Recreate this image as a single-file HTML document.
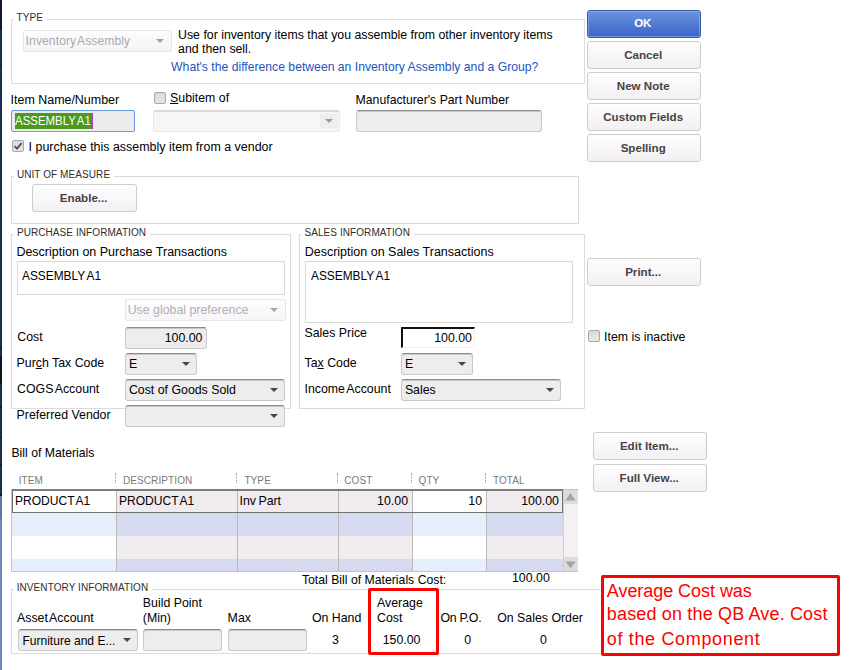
<!DOCTYPE html>
<html><head><meta charset="utf-8"><style>
html,body{margin:0;padding:0;background:#fff;width:866px;height:670px;overflow:hidden;position:relative;font-family:"Liberation Sans",sans-serif;}
.t{position:absolute;white-space:pre;}
.b{position:absolute;box-sizing:border-box;}
</style></head><body>
<div class="b" style="left:0px;top:0px;width:2px;height:30px;background:#0d1a2c;"></div>
<div class="b" style="left:0px;top:30px;width:2px;height:466px;background:#1b2f4d;"></div>
<div class="b" style="left:0px;top:356px;width:2px;height:28px;background:#0b1624;"></div>
<div class="b" style="left:0px;top:65px;width:2px;height:1px;background:#0b1624;"></div>
<div class="b" style="left:0px;top:347px;width:2px;height:1px;background:#0b1624;"></div>
<div class="b" style="left:0px;top:407px;width:2px;height:1px;background:#0b1624;"></div>
<div class="b" style="left:0px;top:437px;width:2px;height:1px;background:#0b1624;"></div>
<div class="b" style="left:0px;top:464px;width:2px;height:1px;background:#0b1624;"></div>
<div class="b" style="left:0px;top:494px;width:2px;height:1px;background:#0b1624;"></div>
<div class="b" style="left:0px;top:495px;width:2px;height:1px;background:#0b1624;"></div>
<div class="b" style="left:0px;top:496px;width:2px;height:174px;background:#6b8bbc;"></div>
<div class="b" style="left:0px;top:496px;width:2px;height:23px;background:#5f7aa0;"></div>
<div class="b" style="left:11px;top:19px;width:574px;height:65px;border:1px solid #dedade;"></div>
<div class="t" style="left:16.60px;top:12.54px;font-size:10px;line-height:10px;color:#2e2e2e;font-weight:normal;background:#fff;padding:0 4px 0 3px;margin-left:-3px;letter-spacing:0.08px;">TYPE</div>
<div class="b" style="left:23px;top:30px;width:149px;height:22px;background:linear-gradient(#fdfdfd,#f6f3f6);border:1px solid #e6e6e6;border-radius:2px;"></div>
<div class="t" style="left:25.60px;top:35.26px;font-size:12.1px;line-height:12.1px;color:#a9a9b0;font-weight:normal;word-spacing:-2px;letter-spacing:0.1px;">Inventory Assembly</div>
<svg class="b" style="left:156px;top:39px" width="8" height="4" viewBox="0 0 8 4"><path d="M0 0H8L4.0 4Z" fill="#a0a0a0"/></svg>
<div class="t" style="left:178.10px;top:29.29px;font-size:12.3px;line-height:12.3px;color:#000;font-weight:normal;">Use for inventory items that you assemble from other inventory items</div>
<div class="t" style="left:178.10px;top:43.29px;font-size:12.3px;line-height:12.3px;color:#000;font-weight:normal;">and then sell.</div>
<div class="t" style="left:171.10px;top:61.37px;font-size:12.2px;line-height:12.2px;color:#2455bd;font-weight:normal;">What's the difference between an Inventory Assembly and a Group?</div>
<div class="t" style="left:10.60px;top:93.86px;font-size:12.45px;line-height:12.45px;color:#000;font-weight:normal;">Item Name/Number</div>
<div class="b" style="left:11px;top:110px;width:124px;height:22px;background:#ececec;border:1px solid #6c9ad6;border-radius:2px;"></div>
<div class="b" style="left:15px;top:113px;width:78px;height:16px;background:#4b9a1b;"></div>
<div class="b" style="left:92px;top:113px;width:1px;height:16px;background:#a040e0;"></div>
<div class="t" style="left:14.60px;top:114.79px;font-size:12.3px;line-height:12.3px;color:#fff;font-weight:normal;word-spacing:-1.5px;transform:scaleX(0.93);transform-origin:0 0;">ASSEMBLY A1</div>
<div class="b" style="left:154px;top:92px;width:12px;height:12px;background:linear-gradient(#d8d8d8,#e8e8e8);border:1px solid #a8a8a8;border-radius:2px;"></div>
<div class="t" style="left:170.10px;top:91.85px;font-size:12.35px;line-height:12.35px;color:#000;font-weight:normal;"><u>S</u>ubitem of</div>
<div class="b" style="left:153px;top:110px;width:187px;height:22px;background:#f6f6f6;border:1px solid #e8e8e8;border-top:2px solid #dcd8dc;border-radius:2px;"></div>
<div class="b" style="left:320px;top:114px;width:18px;height:14px;background:#eeeeee;"></div>
<svg class="b" style="left:325px;top:119px" width="8" height="4" viewBox="0 0 8 4"><path d="M0 0H8L4.0 4Z" fill="#9a9a9a"/></svg>
<div class="t" style="left:355.60px;top:94.33px;font-size:12.25px;line-height:12.25px;color:#000;font-weight:normal;">Manufacturer's Part Number</div>
<div class="b" style="left:356px;top:110px;width:186px;height:22px;background:#ededed;border:1px solid #c9c9c9;border-top-color:#8c8c8c;border-radius:3px;box-shadow:inset 0 1px 0 #c8c8c8;"></div>
<div class="b" style="left:12px;top:140px;width:12px;height:12px;background:linear-gradient(#d8d8d8,#e8e8e8);border:1px solid #a8a8a8;border-radius:2px;"></div>
<svg class="b" style="left:13px;top:141px" width="10" height="10" viewBox="0 0 10 10"><path d="M1.5 5.2L4 7.6L8.6 2.2" stroke="#505050" stroke-width="1.8" fill="none"/></svg>
<div class="t" style="left:28.60px;top:141.16px;font-size:12.45px;line-height:12.45px;color:#000;font-weight:normal;">I purchase this assembly item from a vendor</div>
<div class="b" style="left:11px;top:176px;width:568px;height:48px;border:1px solid #dedade;"></div>
<div class="t" style="left:16.90px;top:169.83px;font-size:10px;line-height:10px;color:#2e2e2e;font-weight:normal;background:#fff;padding:0 4px 0 3px;margin-left:-3px;letter-spacing:0.08px;">UNIT OF MEASURE</div>
<div class="b" style="left:32px;top:184px;width:105px;height:28px;background:linear-gradient(#fefefe,#f3eff3);border:1px solid #cdcdcd;border-radius:3px;"></div>
<div class="t" style="left:-116.3px;width:400px;text-align:center;top:192.28px;font-size:11.6px;line-height:11.6px;color:#444;font-weight:bold;">Enable...</div>
<div class="b" style="left:587px;top:10px;width:114px;height:28px;background:linear-gradient(#6a94e0,#3c63c8);border:1px solid #3a5aa6;border-radius:3px;box-shadow:inset 0 0 0 1px rgba(150,185,245,0.55);"></div>
<div class="t" style="left:442.79999999999995px;width:400px;text-align:center;top:18.47px;font-size:11.5px;line-height:11.5px;color:#fff;font-weight:bold;">OK</div>
<div class="b" style="left:587px;top:41px;width:114px;height:28px;background:linear-gradient(#fefefe,#f3eff3);border:1px solid #cdcdcd;border-radius:3px;"></div>
<div class="t" style="left:443.20000000000005px;width:400px;text-align:center;top:48.98px;font-size:11.6px;line-height:11.6px;color:#444;font-weight:bold;">Cancel</div>
<div class="b" style="left:587px;top:72px;width:114px;height:28px;background:linear-gradient(#fefefe,#f3eff3);border:1px solid #cdcdcd;border-radius:3px;"></div>
<div class="t" style="left:443.20000000000005px;width:400px;text-align:center;top:79.98px;font-size:11.6px;line-height:11.6px;color:#444;font-weight:bold;">New Note</div>
<div class="b" style="left:587px;top:103px;width:114px;height:28px;background:linear-gradient(#fefefe,#f3eff3);border:1px solid #cdcdcd;border-radius:3px;"></div>
<div class="t" style="left:443.20000000000005px;width:400px;text-align:center;top:110.98px;font-size:11.6px;line-height:11.6px;color:#444;font-weight:bold;">Custom Fields</div>
<div class="b" style="left:587px;top:134px;width:114px;height:28px;background:linear-gradient(#fefefe,#f3eff3);border:1px solid #cdcdcd;border-radius:3px;"></div>
<div class="t" style="left:443.20000000000005px;width:400px;text-align:center;top:141.98px;font-size:11.6px;line-height:11.6px;color:#444;font-weight:bold;">Spellin<span style="text-decoration:underline">g</span></div>
<div class="b" style="left:587px;top:258px;width:114px;height:28px;background:linear-gradient(#fefefe,#f3eff3);border:1px solid #cdcdcd;border-radius:3px;"></div>
<div class="t" style="left:443.20000000000005px;width:400px;text-align:center;top:265.78px;font-size:11.6px;line-height:11.6px;color:#444;font-weight:bold;">Print...</div>
<div class="b" style="left:588px;top:330px;width:12px;height:12px;background:linear-gradient(#d8d8d8,#e8e8e8);border:1px solid #a8a8a8;border-radius:2px;"></div>
<div class="t" style="left:604.10px;top:331.49px;font-size:12.3px;line-height:12.3px;color:#000;font-weight:normal;">Item is inactive</div>
<div class="b" style="left:11px;top:234px;width:280px;height:175px;border:1px solid #dedade;"></div>
<div class="t" style="left:16.90px;top:228.03px;font-size:10px;line-height:10px;color:#2e2e2e;font-weight:normal;background:#fff;padding:0 4px 0 3px;margin-left:-3px;letter-spacing:0.08px;">PURCHASE INFORMATION</div>
<div class="t" style="left:16.40px;top:245.92px;font-size:12.5px;line-height:12.5px;color:#000;font-weight:normal;">Description on Purchase Transactions</div>
<div class="b" style="left:17px;top:261px;width:268px;height:34px;background:#fff;border:1px solid #dcd8dc;"></div>
<div class="t" style="left:22.30px;top:270.29px;font-size:12.3px;line-height:12.3px;color:#000;font-weight:normal;word-spacing:-1px;transform:scaleX(0.965);transform-origin:0 0;">ASSEMBLY A1</div>
<div class="b" style="left:125px;top:299px;width:161px;height:22px;background:linear-gradient(#fdfdfd,#f7f5f7);border:1px solid #e6e6e6;border-radius:2px;"></div>
<div class="t" style="left:127.70px;top:304.25px;font-size:12.35px;line-height:12.35px;color:#b0b0b8;font-weight:normal;">Use global preference</div>
<svg class="b" style="left:270px;top:308px" width="8" height="4" viewBox="0 0 8 4"><path d="M0 0H8L4.0 4Z" fill="#a8a8a8"/></svg>
<div class="t" style="left:17.30px;top:331.35px;font-size:12.35px;line-height:12.35px;color:#000;font-weight:normal;">Cost</div>
<div class="b" style="left:125px;top:327px;width:82px;height:22px;background:#ededed;border:1px solid #c9c9c9;border-top-color:#8c8c8c;border-radius:3px;box-shadow:inset 0 1px 0 #c8c8c8;"></div>
<div class="t" style="right:663.5px;top:332.25px;font-size:12.35px;line-height:12.35px;color:#000;font-weight:normal;">100.00</div>
<div class="t" style="left:16.60px;top:357.15px;font-size:12.35px;line-height:12.35px;color:#000;font-weight:normal;">Pur<u>c</u>h Tax Code</div>
<div class="b" style="left:125px;top:353px;width:72px;height:22px;background:#ededed;border:1px solid #c9c9c9;border-top-color:#8c8c8c;border-radius:3px;box-shadow:inset 0 1px 0 #c8c8c8;"></div>
<div class="t" style="left:128.90px;top:358.25px;font-size:12.35px;line-height:12.35px;color:#000;font-weight:normal;">E</div>
<svg class="b" style="left:182px;top:362px" width="8" height="4" viewBox="0 0 8 4"><path d="M0 0H8L4.0 4Z" fill="#454545"/></svg>
<div class="t" style="left:17.10px;top:383.05px;font-size:12.35px;line-height:12.35px;color:#000;font-weight:normal;word-spacing:-1.5px;">COGS Account</div>
<div class="b" style="left:125px;top:379px;width:160px;height:22px;background:#ededed;border:1px solid #c9c9c9;border-top-color:#8c8c8c;border-radius:3px;box-shadow:inset 0 1px 0 #c8c8c8;"></div>
<div class="t" style="left:128.90px;top:384.25px;font-size:12.35px;line-height:12.35px;color:#000;font-weight:normal;">Cost of Goods Sold</div>
<svg class="b" style="left:270px;top:388px" width="8" height="4" viewBox="0 0 8 4"><path d="M0 0H8L4.0 4Z" fill="#454545"/></svg>
<div class="t" style="left:16.60px;top:409.25px;font-size:12.35px;line-height:12.35px;color:#000;font-weight:normal;">Preferred Vendor</div>
<div class="b" style="left:125px;top:405px;width:160px;height:22px;background:#ededed;border:1px solid #c9c9c9;border-top-color:#8c8c8c;border-radius:3px;box-shadow:inset 0 1px 0 #c8c8c8;"></div>
<svg class="b" style="left:270px;top:414px" width="8" height="4" viewBox="0 0 8 4"><path d="M0 0H8L4.0 4Z" fill="#454545"/></svg>
<div class="b" style="left:299px;top:234px;width:286px;height:175px;border:1px solid #dedade;"></div>
<div class="t" style="left:304.40px;top:228.03px;font-size:10px;line-height:10px;color:#2e2e2e;font-weight:normal;background:#fff;padding:0 4px 0 3px;margin-left:-3px;letter-spacing:0.08px;">SALES INFORMATION</div>
<div class="t" style="left:304.70px;top:246.02px;font-size:12.5px;line-height:12.5px;color:#000;font-weight:normal;">Description on Sales Transactions</div>
<div class="b" style="left:305px;top:261px;width:268px;height:62px;background:#fff;border:1px solid #dcd8dc;"></div>
<div class="t" style="left:310.50px;top:270.29px;font-size:12.3px;line-height:12.3px;color:#000;font-weight:normal;word-spacing:-1px;transform:scaleX(0.965);transform-origin:0 0;">ASSEMBLY A1</div>
<div class="t" style="left:304.50px;top:327.05px;font-size:12.35px;line-height:12.35px;color:#000;font-weight:normal;">Sales Price</div>
<div class="b" style="left:401px;top:327px;width:74px;height:21px;background:#fff;border:1px solid #f0f0f0;border-top:2px solid #111;border-left:2px solid #111;"></div>
<div class="t" style="right:394px;top:332.25px;font-size:12.35px;line-height:12.35px;color:#000;font-weight:normal;">100.00</div>
<div class="t" style="left:304.50px;top:356.75px;font-size:12.35px;line-height:12.35px;color:#000;font-weight:normal;">Ta<u>x</u> Code</div>
<div class="b" style="left:401px;top:353px;width:72px;height:22px;background:#ededed;border:1px solid #c9c9c9;border-top-color:#8c8c8c;border-radius:3px;box-shadow:inset 0 1px 0 #c8c8c8;"></div>
<div class="t" style="left:404.90px;top:358.25px;font-size:12.35px;line-height:12.35px;color:#000;font-weight:normal;">E</div>
<svg class="b" style="left:458px;top:362px" width="8" height="4" viewBox="0 0 8 4"><path d="M0 0H8L4.0 4Z" fill="#454545"/></svg>
<div class="t" style="left:304.50px;top:382.75px;font-size:12.35px;line-height:12.35px;color:#000;font-weight:normal;word-spacing:-1.5px;">Income Account</div>
<div class="b" style="left:401px;top:379px;width:160px;height:22px;background:#ededed;border:1px solid #c9c9c9;border-top-color:#8c8c8c;border-radius:3px;box-shadow:inset 0 1px 0 #c8c8c8;"></div>
<div class="t" style="left:404.90px;top:384.25px;font-size:12.35px;line-height:12.35px;color:#000;font-weight:normal;">Sales</div>
<svg class="b" style="left:546px;top:388px" width="8" height="4" viewBox="0 0 8 4"><path d="M0 0H8L4.0 4Z" fill="#454545"/></svg>
<div class="b" style="left:593px;top:432px;width:114px;height:28px;background:linear-gradient(#fefefe,#f3eff3);border:1px solid #cdcdcd;border-radius:3px;"></div>
<div class="t" style="left:449.20000000000005px;width:400px;text-align:center;top:439.78px;font-size:11.6px;line-height:11.6px;color:#444;font-weight:bold;">Edit Item...</div>
<div class="b" style="left:593px;top:464px;width:114px;height:28px;background:linear-gradient(#fefefe,#f3eff3);border:1px solid #cdcdcd;border-radius:3px;"></div>
<div class="t" style="left:449.20000000000005px;width:400px;text-align:center;top:471.78px;font-size:11.6px;line-height:11.6px;color:#444;font-weight:bold;">Full View...</div>
<div class="t" style="left:11.40px;top:446.63px;font-size:12.25px;line-height:12.25px;color:#000;font-weight:normal;">Bill of Materials</div>
<div class="t" style="left:18.70px;top:475.94px;font-size:10px;line-height:10px;color:#7a7a7a;font-weight:normal;letter-spacing:0.1px;">ITEM</div>
<div class="t" style="left:122.90px;top:475.94px;font-size:10px;line-height:10px;color:#7a7a7a;font-weight:normal;letter-spacing:0.1px;">DESCRIPTION</div>
<div class="b" style="left:115px;top:473px;width:1px;height:10px;border-left:1px dotted #999"></div>
<div class="t" style="left:244.40px;top:475.94px;font-size:10px;line-height:10px;color:#7a7a7a;font-weight:normal;letter-spacing:0.1px;">TYPE</div>
<div class="b" style="left:236px;top:473px;width:1px;height:10px;border-left:1px dotted #999"></div>
<div class="t" style="left:344.30px;top:475.94px;font-size:10px;line-height:10px;color:#7a7a7a;font-weight:normal;letter-spacing:0.1px;">COST</div>
<div class="b" style="left:337px;top:473px;width:1px;height:10px;border-left:1px dotted #999"></div>
<div class="t" style="left:418.50px;top:475.94px;font-size:10px;line-height:10px;color:#7a7a7a;font-weight:normal;letter-spacing:0.1px;">QTY</div>
<div class="b" style="left:411px;top:473px;width:1px;height:10px;border-left:1px dotted #999"></div>
<div class="t" style="left:492.90px;top:475.94px;font-size:10px;line-height:10px;color:#7a7a7a;font-weight:normal;letter-spacing:0.1px;">TOTAL</div>
<div class="b" style="left:485px;top:473px;width:1px;height:10px;border-left:1px dotted #999"></div>
<div class="b" style="left:12px;top:490px;width:104px;height:23px;background:#ffffff;"></div>
<div class="b" style="left:116px;top:490px;width:121px;height:23px;background:#efebee;"></div>
<div class="b" style="left:237px;top:490px;width:101px;height:23px;background:#efebee;"></div>
<div class="b" style="left:338px;top:490px;width:74px;height:23px;background:#efebee;"></div>
<div class="b" style="left:412px;top:490px;width:74px;height:23px;background:#ffffff;"></div>
<div class="b" style="left:486px;top:490px;width:77px;height:23px;background:#efebee;"></div>
<div class="b" style="left:12px;top:513px;width:104px;height:23px;background:#e6eefb;"></div>
<div class="b" style="left:116px;top:513px;width:121px;height:23px;background:#d5daee;"></div>
<div class="b" style="left:237px;top:513px;width:101px;height:23px;background:#d5daee;"></div>
<div class="b" style="left:338px;top:513px;width:74px;height:23px;background:#d5daee;"></div>
<div class="b" style="left:412px;top:513px;width:74px;height:23px;background:#e6eefb;"></div>
<div class="b" style="left:486px;top:513px;width:77px;height:23px;background:#d5daee;"></div>
<div class="b" style="left:12px;top:536px;width:104px;height:23px;background:#ffffff;"></div>
<div class="b" style="left:116px;top:536px;width:121px;height:23px;background:#efebee;"></div>
<div class="b" style="left:237px;top:536px;width:101px;height:23px;background:#efebee;"></div>
<div class="b" style="left:338px;top:536px;width:74px;height:23px;background:#efebee;"></div>
<div class="b" style="left:412px;top:536px;width:74px;height:23px;background:#ffffff;"></div>
<div class="b" style="left:486px;top:536px;width:77px;height:23px;background:#efebee;"></div>
<div class="b" style="left:12px;top:559px;width:104px;height:12px;background:#e6eefb;"></div>
<div class="b" style="left:116px;top:559px;width:121px;height:12px;background:#d5daee;"></div>
<div class="b" style="left:237px;top:559px;width:101px;height:12px;background:#d5daee;"></div>
<div class="b" style="left:338px;top:559px;width:74px;height:12px;background:#d5daee;"></div>
<div class="b" style="left:412px;top:559px;width:74px;height:12px;background:#e6eefb;"></div>
<div class="b" style="left:486px;top:559px;width:77px;height:12px;background:#d5daee;"></div>
<div class="b" style="left:116px;top:490px;width:1px;height:81px;background:#b8b8b8;"></div>
<div class="b" style="left:237px;top:490px;width:1px;height:81px;background:#b8b8b8;"></div>
<div class="b" style="left:338px;top:490px;width:1px;height:81px;background:#b8b8b8;"></div>
<div class="b" style="left:412px;top:490px;width:1px;height:81px;background:#b8b8b8;"></div>
<div class="b" style="left:486px;top:490px;width:1px;height:81px;background:#b8b8b8;"></div>
<div class="b" style="left:11px;top:489px;width:567px;height:83px;border:1px solid #c4c4c4;background:transparent;"></div>
<div class="b" style="left:12px;top:489px;width:551px;height:24px;border:1px solid #707070;border-top:2px solid #7c7c7c;"></div>
<div class="b" style="left:13px;top:491px;width:103px;height:21px;background:#fff;"></div>
<div class="t" style="left:15.10px;top:494.59px;font-size:12.3px;line-height:12.3px;color:#000;font-weight:normal;word-spacing:-1.5px;transform:scaleX(0.98);transform-origin:0 0;">PRODUCT A1</div>
<div class="t" style="left:119.30px;top:494.59px;font-size:12.3px;line-height:12.3px;color:#000;font-weight:normal;word-spacing:-1.5px;transform:scaleX(0.98);transform-origin:0 0;">PRODUCT A1</div>
<div class="t" style="left:239.50px;top:494.85px;font-size:12.35px;line-height:12.35px;color:#000;font-weight:normal;word-spacing:-1px;">Inv Part</div>
<div class="t" style="right:458px;top:494.55px;font-size:12.35px;line-height:12.35px;color:#000;font-weight:normal;">10.00</div>
<div class="b" style="left:413px;top:491px;width:73px;height:21px;background:#fff;"></div>
<div class="t" style="right:384px;top:494.55px;font-size:12.35px;line-height:12.35px;color:#000;font-weight:normal;">10</div>
<div class="t" style="right:307px;top:494.55px;font-size:12.35px;line-height:12.35px;color:#000;font-weight:normal;">100.00</div>
<div class="b" style="left:563px;top:490px;width:15px;height:81px;background:#f4f0f4;border-left:1px solid #cfcfcf;"></div>
<div class="b" style="left:564px;top:490px;width:14px;height:14px;background:#dcdcdc;"></div>
<div class="b" style="left:564px;top:557px;width:14px;height:14px;background:#dcdcdc;"></div>
<svg class="b" style="left:565px;top:492px" width="11" height="9"><path d="M0.5 8.5L5.5 1L10.5 8.5Z" fill="#a4a4a4"/></svg>
<svg class="b" style="left:565px;top:561px" width="11" height="8"><path d="M0.5 0.5L5.5 7.5L10.5 0.5Z" fill="#a4a4a4"/></svg>
<div class="t" style="left:301.90px;top:574.13px;font-size:12.25px;line-height:12.25px;color:#000;font-weight:normal;">Total Bill of Materials Cost:</div>
<div class="t" style="left:512.00px;top:571.85px;font-size:12.35px;line-height:12.35px;color:#000;font-weight:normal;">100.00</div>
<div class="b" style="left:11px;top:589px;width:610px;height:65px;border:1px solid #dedade;"></div>
<div class="t" style="left:16.70px;top:583.13px;font-size:10px;line-height:10px;color:#2e2e2e;font-weight:normal;background:#fff;padding:0 4px 0 3px;margin-left:-3px;letter-spacing:0.08px;">INVENTORY INFORMATION</div>
<div class="t" style="left:17.00px;top:611.95px;font-size:12.35px;line-height:12.35px;color:#000;font-weight:normal;word-spacing:-1.5px;">Asset Account</div>
<div class="b" style="left:18px;top:629px;width:120px;height:22px;background:#ededed;border:1px solid #c9c9c9;border-top-color:#8c8c8c;border-radius:3px;box-shadow:inset 0 1px 0 #c8c8c8;"></div>
<div class="t" style="left:22.40px;top:634.50px;font-size:12.05px;line-height:12.05px;color:#000;font-weight:normal;">Furniture and E...</div>
<svg class="b" style="left:123px;top:638px" width="8" height="4" viewBox="0 0 8 4"><path d="M0 0H8L4.0 4Z" fill="#454545"/></svg>
<div class="t" style="left:142.80px;top:596.85px;font-size:12.35px;line-height:12.35px;color:#000;font-weight:normal;">Build Point</div>
<div class="t" style="left:142.80px;top:611.85px;font-size:12.35px;line-height:12.35px;color:#000;font-weight:normal;">(Min)</div>
<div class="b" style="left:143px;top:629px;width:79px;height:22px;background:#ededed;border:1px solid #c9c9c9;border-top-color:#8c8c8c;border-radius:3px;box-shadow:inset 0 1px 0 #c8c8c8;"></div>
<div class="t" style="left:227.60px;top:611.85px;font-size:12.35px;line-height:12.35px;color:#000;font-weight:normal;">Max</div>
<div class="b" style="left:228px;top:629px;width:79px;height:22px;background:#ededed;border:1px solid #c9c9c9;border-top-color:#8c8c8c;border-radius:3px;box-shadow:inset 0 1px 0 #c8c8c8;"></div>
<div class="t" style="left:311.90px;top:611.85px;font-size:12.35px;line-height:12.35px;color:#000;font-weight:normal;">On Hand</div>
<div class="t" style="left:332.00px;top:634.25px;font-size:12.35px;line-height:12.35px;color:#000;font-weight:normal;">3</div>
<div class="t" style="left:377.00px;top:597.15px;font-size:12.35px;line-height:12.35px;color:#000;font-weight:normal;">Average</div>
<div class="t" style="left:377.00px;top:612.05px;font-size:12.35px;line-height:12.35px;color:#000;font-weight:normal;">Cost</div>
<div class="t" style="left:382.70px;top:633.75px;font-size:12.35px;line-height:12.35px;color:#000;font-weight:normal;">150.00</div>
<div class="t" style="left:440.40px;top:611.85px;font-size:12.35px;line-height:12.35px;color:#000;font-weight:normal;letter-spacing:-0.3px;">On P.O.</div>
<div class="t" style="left:464.30px;top:634.25px;font-size:12.35px;line-height:12.35px;color:#000;font-weight:normal;">0</div>
<div class="t" style="left:497.20px;top:611.85px;font-size:12.35px;line-height:12.35px;color:#000;font-weight:normal;">On Sales Order</div>
<div class="t" style="left:539.90px;top:634.25px;font-size:12.35px;line-height:12.35px;color:#000;font-weight:normal;">0</div>
<div class="b" style="left:368px;top:588px;width:71px;height:67px;border:3px solid #f00;border-radius:2px;"></div>
<div class="b" style="left:601px;top:575px;width:239px;height:81px;border:3px solid #f00;border-radius:2px;background:#fff;"></div>
<div class="t" style="left:606.80px;top:581.66px;font-size:18px;line-height:18px;color:#f00;font-weight:normal;letter-spacing:-0.05px;">Average Cost was</div>
<div class="t" style="left:606.80px;top:605.46px;font-size:18px;line-height:18px;color:#f00;font-weight:normal;letter-spacing:0.16px;">based on the QB Ave. Cost</div>
<div class="t" style="left:606.80px;top:629.56px;font-size:18px;line-height:18px;color:#f00;font-weight:normal;letter-spacing:0.66px;">of the Component</div>
</body></html>
